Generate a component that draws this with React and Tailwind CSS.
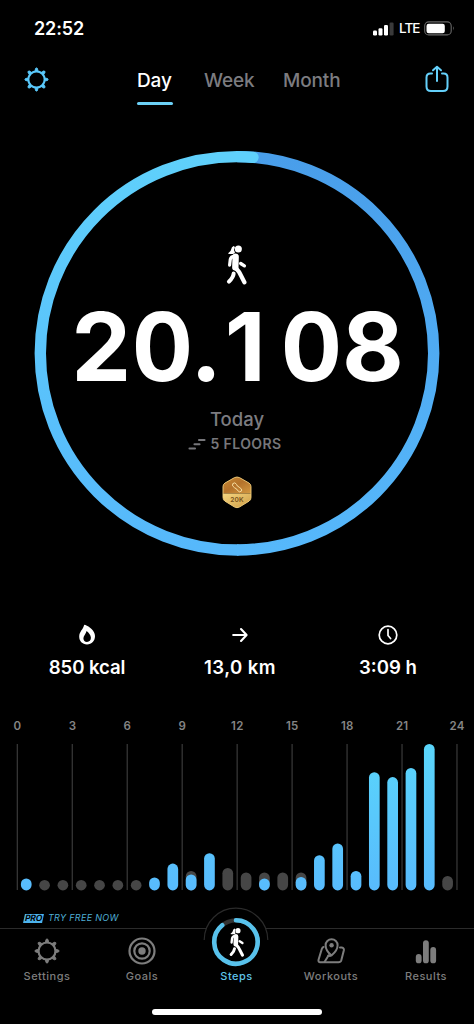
const tabs = [
  { label: 'Day', box: 'w-[36px]', active: true },
  { label: 'Week', box: 'w-[52px]' },
  { label: 'Month', box: 'w-[58px]' },
];

// one entry per hour: blue = steps today, grey = average
const hours = [
  { blue: 12 }, { grey: 10.5 }, { grey: 10.5 }, { grey: 10.5 }, { grey: 10.5 }, { grey: 10.5 },
  { grey: 10.5 }, { blue: 13 }, { blue: 26.8 }, { grey: 19.5, blue: 16 }, { blue: 37.2 }, { grey: 22.5 },
  { grey: 18 }, { grey: 18, blue: 12 }, { grey: 18 }, { grey: 18, blue: 13.5 }, { blue: 35.2 }, { blue: 47 },
  { blue: 19.5 }, { blue: 118.2 }, { blue: 113.3 }, { blue: 122.4 }, { blue: 146.5 }, { grey: 14.5 },
];

const ticks = [0, 3, 6, 9, 12, 15, 18, 21, 24];

function Gear({ className }) {
  return (
    <svg viewBox="0 0 26 26" className={className} fill="none" stroke="currentColor">
      <circle cx="13" cy="13" r="8.5" strokeWidth="2.2" />
      {[0, 45, 90, 135, 180, 225, 270, 315].map((a) => (
        <path key={a} d="M11.4 4.6 L12 1.5 Q13 .4 14 1.5 L14.6 4.6Z" fill="currentColor" strokeWidth="1" transform={`rotate(${a} 13 13)`} />
      ))}
    </svg>
  );
}

function Walker({ className }) {
  return (
    <svg viewBox="0 0 64 122" className={className} fill="none" stroke="white" strokeLinecap="round" strokeLinejoin="round">
      <circle cx="36" cy="15" r="10.5" fill="white" stroke="none" />
      <path d="M22 6 L26 9 Q21 16 26 25 L24 28 Q15 31 5 28 Q15 22 17 10 Z" fill="white" stroke="none" />
      <path d="M25 36 Q14 37 12 46 L10 63" strokeWidth="9.5" />
      <path d="M28 38 L27 70" strokeWidth="19" />
      <path d="M43 58 L54 65" strokeWidth="10" />
      <path d="M28 71 L38 83 Q42 90 54 114" strokeWidth="12.5" />
      <path d="M22 88 Q21 99 8 112" strokeWidth="12" />
    </svg>
  );
}

function StatusBar() {
  return (
    <div className="flex h-[56px] items-center justify-between pl-[34px] pr-[19px] pt-[1px]">
      <span className="text-[18px] font-semibold leading-none tracking-[-0.1px]">22:52</span>
      <div className="flex items-center">
        <svg className="h-[14px] w-[22px]" viewBox="0 0 22 14" fill="white">
          <rect x="1" y="8.5" width="4" height="5" rx="1.2" />
          <rect x="6.5" y="6.2" width="4" height="7.3" rx="1.2" />
          <rect x="12" y="3" width="4" height="10.5" rx="1.2" />
          <rect x="17.6" y=".5" width="4" height="13" rx="1.2" fill="#3a3a3a" />
        </svg>
        <span className="ml-[5px] mr-[4px] w-[21px] text-[13.5px] font-medium leading-none tracking-[-0.9px]">LTE</span>
        <svg className="h-[15px] w-[31px]" viewBox="0 0 31 15">
          <rect x=".7" y=".9" width="26.5" height="13" rx="4" fill="none" stroke="#686868" strokeWidth="1.1" />
          <rect x="2.5" y="2.7" width="18.3" height="9.6" rx="2.2" fill="white" />
          <path d="M29 5.2 Q30.8 7.4 29 9.6Z" fill="#777" />
        </svg>
      </div>
    </div>
  );
}

function Header() {
  return (
    <header className="flex h-[50px] items-start pl-[24px] pr-[24px]">
      <Gear className="mt-[11px] h-[25px] w-[25px] text-[#5ac8fa]" />
      <div className="ml-[88px] flex items-start">
        {tabs.map(({ label, box, active }, i) => (
          <div key={label} className={i === 1 ? 'ml-[31px] mr-[27px]' : ''}>
            <div className={`${box} h-[46px] whitespace-nowrap pt-[13px] text-[19px] font-medium leading-[24px] tracking-[-0.15px] ${active ? 'text-white' : 'text-[#7c7c80]'}`}>
              {label}
            </div>
            {active && <div className="h-[2.5px] rounded-full bg-[#6bd0f6]" />}
          </div>
        ))}
      </div>
      <svg className="ml-auto mt-[8px] h-[30px] w-[26px]" viewBox="0 0 26 30" fill="none" stroke="#64d0fa" strokeWidth="2" strokeLinecap="round" strokeLinejoin="round">
        <path d="M8 9.5 H6.5 Q2.5 9.5 2.5 13.5 V22.5 Q2.5 27 7 27 H19 Q23.5 27 23.5 22.5 V13.5 Q23.5 9.5 19.5 9.5 H18" />
        <path d="M13 17 V3.5 M9 6.3 L13 2.8 L17 6.3" />
      </svg>
    </header>
  );
}

function Badge() {
  return (
    <svg className="mt-[22px] h-[34px] w-[30px]" viewBox="0 0 30 34">
      <defs>
        <linearGradient id="gold" x1="0" y1="0" x2="1" y2="1">
          <stop offset="0" stopColor="#c98b35" />
          <stop offset=".5" stopColor="#b4722b" />
          <stop offset="1" stopColor="#d59b43" />
        </linearGradient>
        <linearGradient id="goldLow" x1="0" y1="0" x2="1" y2="1">
          <stop offset="0" stopColor="#f6d782" />
          <stop offset="1" stopColor="#c9963e" />
        </linearGradient>
        <clipPath id="hex">
          <path d="M12.5 1.6 Q15 .4 17.5 1.6 L27 7 Q29 8.2 29 10.5 V21.5 Q29 24 27 25.2 L17.5 31 Q15 32.4 12.5 31 L3 25.2 Q1 24 1 21.5 V10.5 Q1 8.2 3 7Z" />
        </clipPath>
      </defs>
      <g clipPath="url(#hex)">
        <rect width="30" height="17.5" fill="url(#gold)" />
        <rect y="17.5" width="30" height="17" fill="url(#goldLow)" />
      </g>
      <path d="M12.5 1.6 Q15 .4 17.5 1.6 L27 7 Q29 8.2 29 10.5 V21.5 Q29 24 27 25.2 L17.5 31 Q15 32.4 12.5 31 L3 25.2 Q1 24 1 21.5 V10.5 Q1 8.2 3 7Z" fill="none" stroke="#f3cf7c" strokeWidth=".9" />
      <path d="M10.8 7.6 Q13 5.6 14.6 8.4 Q14.8 10.2 17.2 11.2 Q20.6 13 19.6 15 Q17.6 17 15.4 14.4 Q15 12.6 12.6 11.8 Q9.4 10 10.8 7.6Z" fill="none" stroke="#f8dfa3" strokeWidth="1" />
      <text x="15" y="25.6" textAnchor="middle" fontSize="6.6" fontWeight="600" fill="#765019" letterSpacing=".2">20K</text>
    </svg>
  );
}

function Ring() {
  return (
    <section className="relative mx-auto mt-[44px] flex h-[406px] w-[406px] flex-col items-center">
      <svg className="absolute inset-0" viewBox="0 0 406 406" fill="none" strokeWidth="11.4">
        <defs>
          <linearGradient id="ring" x1="0" y1="0" x2="0" y2="1">
            <stop offset="0" stopColor="#5fd0fb" />
            <stop offset="1" stopColor="#56b8fb" />
          </linearGradient>
          <linearGradient id="ringRight" x1="0" y1="0" x2="0" y2="1">
            <stop offset="0" stopColor="#499eea" />
            <stop offset="1" stopColor="#56b8fb" />
          </linearGradient>
        </defs>
        <path d="M203 6.6 A196.7 196.7 0 0 1 203 400" stroke="url(#ringRight)" />
        <path d="M203 400 A196.7 196.7 0 0 1 203 6.6 Q212 6.6 219 7.3" stroke="url(#ring)" strokeLinecap="round" />
      </svg>
      <Walker className="mt-[94px] h-[41px] w-[22px]" />
      <div className="mt-[15px] flex h-[94px] whitespace-nowrap text-[95px] font-bold leading-[94px]">
        <span className="tabular-nums">20.</span>
        <span className="w-[62px] pl-[6px]">1</span>
        <span className="tabular-nums">08</span>
      </div>
      <div className="mt-[13px] text-[18.5px] font-medium leading-[24px] text-[#7c7c80]">Today</div>
      <div className="mt-[3px] -ml-[4px] flex items-center gap-[4px] text-[14px] font-semibold leading-[20px] text-[#77777b]">
        <svg className="h-[12px] w-[18px]" viewBox="0 0 18 12" stroke="currentColor" strokeWidth="2.1" strokeLinecap="round">
          <path d="M1.5 10.5 H7 M6.5 6.3 H11.5 M11 2 H16.5" />
        </svg>
        <span className="tracking-[0.4px]">5 FLOORS</span>
      </div>
      <Badge />
    </section>
  );
}

function Stats() {
  return (
    <section className="mt-[67px] flex h-[61px] pl-[37px] text-[18.6px] font-semibold leading-[24px]">
      <div className="flex w-[100px] flex-col items-center">
        <svg className="h-[24px] w-[20px]" viewBox="0 0 20 24">
          <path fillRule="evenodd" fill="white" d="M8.5 2 C12 3.4 18 7.5 18 13 C18 18 14.8 21.4 10 21.4 C5.3 21.4 2.2 18.2 2.2 13.6 C2.2 9 6.2 6 6.8 3.1 Q7.1 1.3 8.5 2Z M9.6 8 C9.2 10.5 6.4 12.8 6.4 15.2 C6.4 17.4 7.8 18.9 10 18.9 C12.4 18.9 13.9 17.3 13.9 14.8 C13.9 12 11.5 9.5 9.6 8Z" />
        </svg>
        <span className="mt-[8px] whitespace-nowrap tracking-[-0.1px]">850 kcal</span>
      </div>
      <div className="ml-[53px] flex w-[100px] flex-col items-center">
        <svg className="h-[24px] w-[18px]" viewBox="0 0 18 24" fill="none" stroke="white" strokeWidth="2.1" strokeLinecap="round" strokeLinejoin="round">
          <path d="M2.2 12 H15 M10 6 L15.6 12 L10 18" />
        </svg>
        <span className="mt-[8px] whitespace-nowrap tracking-[0.4px]">13,0 km</span>
      </div>
      <div className="ml-[48px] flex w-[100px] flex-col items-center">
        <svg className="h-[24px] w-[22px]" viewBox="0 0 22 24" fill="none" stroke="white" strokeWidth="1.7" strokeLinecap="round" strokeLinejoin="round">
          <circle cx="11" cy="12" r="8.8" />
          <path d="M11 6.5 V12.5 L13.6 15.5" />
        </svg>
        <span className="mt-[8px] whitespace-nowrap">3:09 h</span>
      </div>
    </section>
  );
}

function Chart() {
  return (
    <section className="mt-[34px]">
      <div className="-ml-[10px] flex">
        {ticks.map((t) => (
          <span key={t} className="w-[54.96px] flex-none text-center text-[11.5px] font-semibold leading-[16px] tracking-[0.2px] text-[#858585]">{t}</span>
        ))}
      </div>
      <svg className="mt-[9px] h-[148px] w-[474px]" viewBox="0 0 474 148">
        <defs>
          <linearGradient id="bars" gradientUnits="userSpaceOnUse" x1="0" y1="0" x2="0" y2="147">
            <stop offset="0" stopColor="#5ad6fb" />
            <stop offset="1" stopColor="#58bbfd" />
          </linearGradient>
        </defs>
        {ticks.map((t, i) => (
          <rect key={t} x={16.7 + i * 54.96} y="1" width="1.2" height="146" fill="#3a3a3a" />
        ))}
        {hours.map(({ grey, blue }, i) => (
          <g key={i}>
            {grey && <rect x={20.9 + i * 18.32} y={147.4 - grey} width="10.7" height={grey} rx="5.3" fill="#464646" />}
            {blue && <rect x={20.9 + i * 18.32} y={147.4 - blue} width="10.7" height={blue} rx="5.3" fill="url(#bars)" />}
          </g>
        ))}
      </svg>
    </section>
  );
}

function NavItem({ label, width, active, children }) {
  return (
    <div className={`${width} flex flex-none flex-col items-center ${active ? 'text-[#5fc4ea]' : 'text-[#7d7d7d]'}`}>
      <div className="flex h-[37px] items-center pt-[7px]">{children}</div>
      <span className="mt-[3px] whitespace-nowrap text-[11px] font-medium leading-[14px] tracking-[0.5px]">{label}</span>
    </div>
  );
}

function BottomNav() {
  return (
    <nav className="relative flex h-[96px] border-t border-[#2b2b2b]">
      <svg className="absolute left-[200px] -top-[22px] h-[68px] w-[72px]" viewBox="0 0 72 68" fill="none">
        <path d="M7 24 V20.5 A31 31 0 0 1 65 20.5 V24Z" fill="black" />
        <path d="M4.2 34 A31.8 31.8 0 0 1 67.8 34" stroke="#2b2b2b" strokeWidth="1.2" transform="translate(0 -1)" />
        <circle cx="36" cy="35" r="21.7" stroke="#343434" strokeWidth="4.2" />
        <path d="M36 13.3 A21.7 21.7 0 1 1 22.2 18.2" stroke="#58c2ec" strokeWidth="4.6" strokeLinecap="round" />
      </svg>
      <NavItem label="Settings" width="w-[94px]">
        <Gear className="h-[26px] w-[26px]" />
      </NavItem>
      <NavItem label="Goals" width="w-[96px]">
        <svg className="h-[28px] w-[28px]" viewBox="0 0 28 28" fill="none" stroke="currentColor" strokeWidth="2.2">
          <circle cx="14" cy="14" r="12.5" />
          <circle cx="14" cy="14" r="7.7" />
          <circle cx="14" cy="14" r="3.7" fill="currentColor" stroke="none" />
        </svg>
      </NavItem>
      <NavItem label="Steps" width="w-[93px]" active>
        <Walker className="relative -top-[9px] h-[30px] w-[16px]" />
      </NavItem>
      <NavItem label="Workouts" width="w-[96px]">
        <svg className="h-[28px] w-[28px]" viewBox="0 0 28 28" fill="none" stroke="currentColor" strokeWidth="2" strokeLinecap="round" strokeLinejoin="round">
          <path d="M6.6 10 Q5.4 10.2 4.8 12 L1.6 22.5 Q.9 25.2 3.3 25.3 H21.5 Q23.7 25.3 24.3 23.3 L26.8 13.5 Q27.3 11 24.8 10.6 H23" />
          <path d="M7.5 25 L11.5 18.5" />
          <path d="M14.5 18.5 C10.5 15.3 8.6 12.3 8.6 8.3 A6 6 0 0 1 20.6 8.3 C20.6 12.3 18.3 15.3 14.5 18.5 Q12.8 19.5 11.3 18.5" />
          <circle cx="14.6" cy="8.3" r="2.2" fill="currentColor" stroke="none" />
        </svg>
      </NavItem>
      <NavItem label="Results" width="w-[94px]">
        <svg className="h-[26px] w-[24px]" viewBox="0 0 24 26" fill="currentColor">
          <rect x="1.8" y="16" width="5.8" height="9.3" rx="2.9" />
          <rect x="9" y="2.2" width="5.8" height="23.1" rx="2.9" />
          <rect x="16.3" y="9" width="5.8" height="16.3" rx="2.9" />
        </svg>
      </NavItem>
      <div className="absolute bottom-[9.5px] left-[152px] h-[5.5px] w-[170px] rounded-full bg-white" />
    </nav>
  );
}

export default function App() {
  return (
    <main className="flex h-[1024px] w-[474px] flex-col overflow-hidden bg-black font-['Inter',sans-serif] text-white">
      <StatusBar />
      <Header />
      <Ring />
      <Stats />
      <Chart />
      <div className="mt-auto flex items-center gap-[5px] pb-[4px] pl-[24px]">
        <span className="w-[19px] -skew-x-12 whitespace-nowrap bg-[#4db3ec] text-center text-[8.5px] font-bold leading-[9px] tracking-[-0.2px] text-black">PRO</span>
        <span className="text-[9px] italic leading-[12px] tracking-[0.3px] text-[#4fafd6]">TRY FREE NOW</span>
      </div>
      <BottomNav />
    </main>
  );
}
